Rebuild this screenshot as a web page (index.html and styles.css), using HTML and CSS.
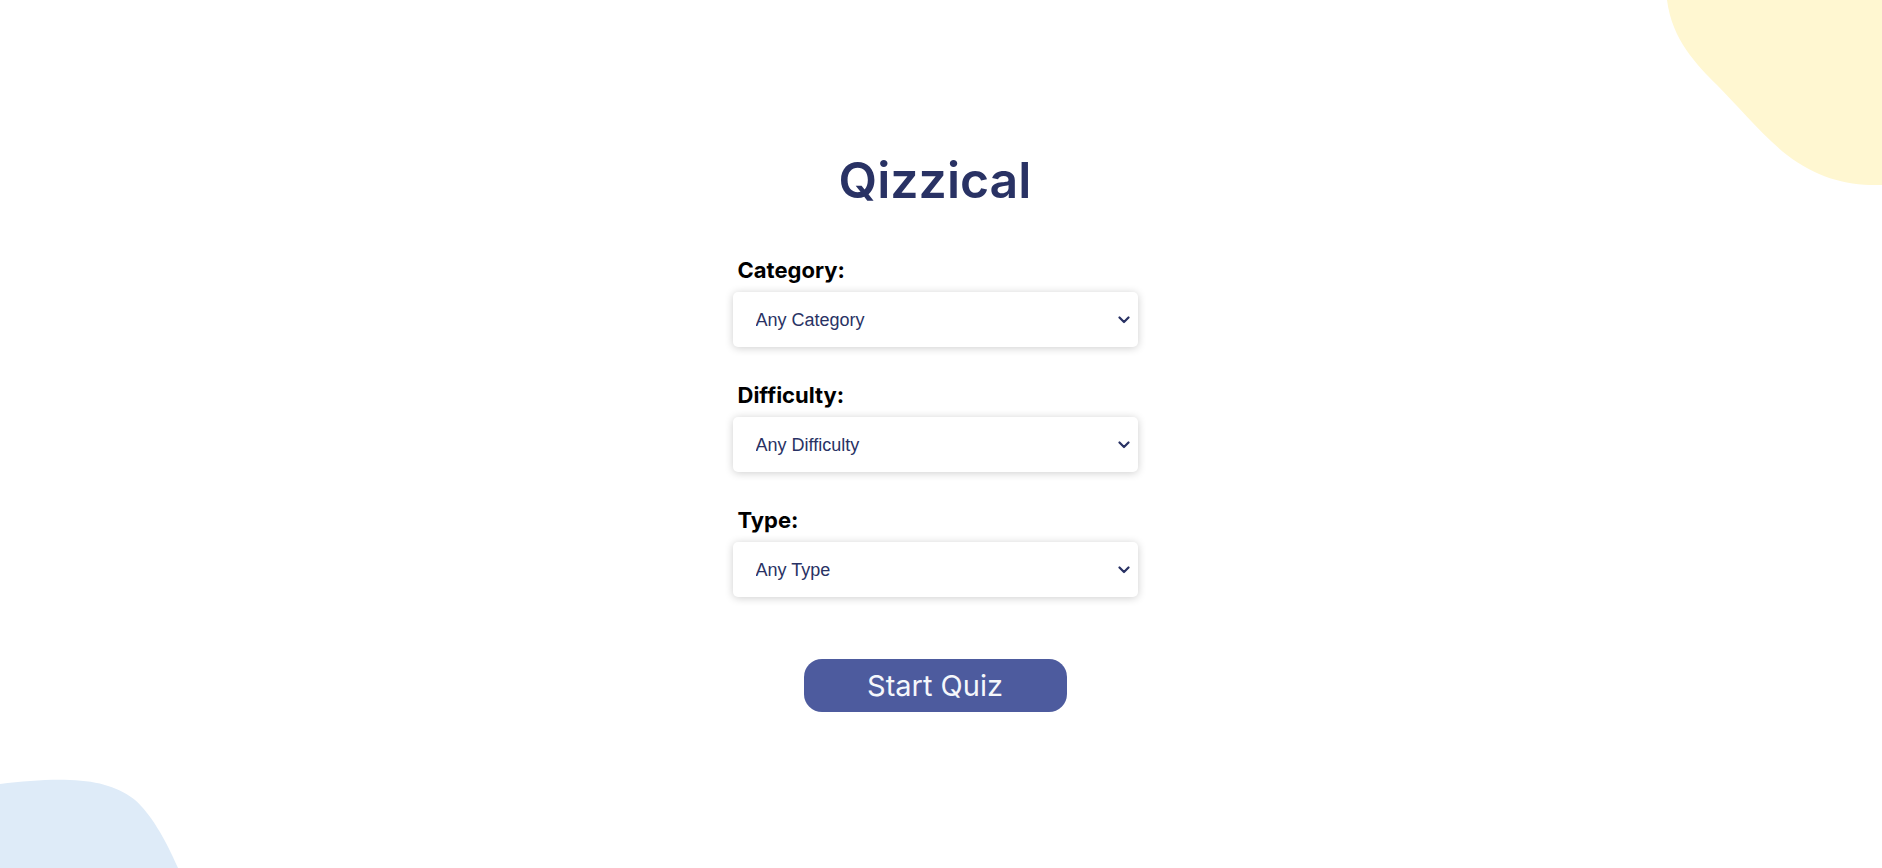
FILE: index.html
```html
<!DOCTYPE html>
<html lang="en">
<head>
<meta charset="utf-8">
<title>Qizzical</title>
<link rel="stylesheet" href="styles.css">
</head>
<body>
<svg class="blob blob-yellow" width="215" height="190" viewBox="0 0 215 190" aria-hidden="true">
  <path d="M0 0 L215 0 L215 185 C180 186 150 178 120 155 C95 135 70 105 50 85 C30 65 5 40 0 0 Z" fill="#fff7d1"/>
</svg>
<svg class="blob blob-blue" width="185" height="90" viewBox="0 0 185 90" aria-hidden="true">
  <path d="M0 6 C25 3 50 1 70 2 C100 3 120 10 135 22 C150 35 165 60 178 90 L0 90 Z" fill="#deebf8"/>
</svg>
<main class="page">
  <h1 class="title">Qizzical</h1>
  <form class="form">
    <div class="field">
      <label class="label" for="cat">Category:</label>
      <div class="select-wrap">
        <select id="cat" class="select"><option>Any Category</option></select>
        <svg class="chev" width="12" height="8" viewBox="0 0 12 8"><path d="M1.5 1.5 L6 6 L10.5 1.5" fill="none" stroke="#293264" stroke-width="2.2" stroke-linecap="round" stroke-linejoin="round"/></svg>
      </div>
    </div>
    <div class="field">
      <label class="label" for="dif">Difficulty:</label>
      <div class="select-wrap">
        <select id="dif" class="select"><option>Any Difficulty</option></select>
        <svg class="chev" width="12" height="8" viewBox="0 0 12 8"><path d="M1.5 1.5 L6 6 L10.5 1.5" fill="none" stroke="#293264" stroke-width="2.2" stroke-linecap="round" stroke-linejoin="round"/></svg>
      </div>
    </div>
    <div class="field">
      <label class="label" for="typ">Type:</label>
      <div class="select-wrap">
        <select id="typ" class="select"><option>Any Type</option></select>
        <svg class="chev" width="12" height="8" viewBox="0 0 12 8"><path d="M1.5 1.5 L6 6 L10.5 1.5" fill="none" stroke="#293264" stroke-width="2.2" stroke-linecap="round" stroke-linejoin="round"/></svg>
      </div>
    </div>
    <button type="button" class="start">Start Quiz</button>
  </form>
</main>
</body>
</html>
```
FILE: styles.css
```css
html, body {
  margin: 0;
  padding: 0;
  background: #ffffff;
  height: 100%;
  overflow: hidden;
}
body {
  position: relative;
  font-family: Inter, "Open Sans", sans-serif;
}
.blob {
  position: absolute;
  z-index: 0;
}
.blob-yellow {
  top: 0;
  right: 0;
}
.blob-blue {
  left: 0;
  bottom: 0;
}
.page {
  position: relative;
  z-index: 1;
  display: flex;
  flex-direction: column;
  align-items: center;
  padding-top: 150px;
  padding-right: 12px;
}
.title {
  margin: 0;
  font-family: Inter, sans-serif;
  font-weight: 600;
  font-size: 50px;
  line-height: 60px;
  color: #293264;
  letter-spacing: 0;
}
.form {
  display: flex;
  flex-direction: column;
  width: 405px;
  margin-top: 47px;
}
.field {
  display: flex;
  flex-direction: column;
  margin-bottom: 35px;
}
.field:nth-of-type(3) {
  margin-bottom: 0;
}
.label {
  font-family: Inter, sans-serif;
  font-weight: 700;
  font-size: 22px;
  line-height: 26px;
  color: #000;
  margin-left: 5px;
  margin-bottom: 9px;
}
.select-wrap {
  position: relative;
}
.select {
  appearance: none;
  -webkit-appearance: none;
  display: block;
  width: 100%;
  height: 55px;
  border: none;
  border-radius: 5px;
  background: #fff;
  box-shadow: 0 1px 8px rgba(0, 0, 0, 0.2);
  padding: 0 0 0 23px;
  font-family: "Liberation Sans", Arial, sans-serif;
  font-size: 18px;
  color: #293264;
  outline: none;
}
.chev {
  position: absolute;
  right: 8px;
  top: 24px;
  pointer-events: none;
}
.start {
  align-self: center;
  margin-top: 62px;
  width: 263px;
  height: 53px;
  border: none;
  border-radius: 18px;
  background: #4d5b9e;
  color: #f5f7fb;
  font-family: Inter, sans-serif;
  font-size: 29px;
  font-weight: 400;
  cursor: pointer;
}
```
